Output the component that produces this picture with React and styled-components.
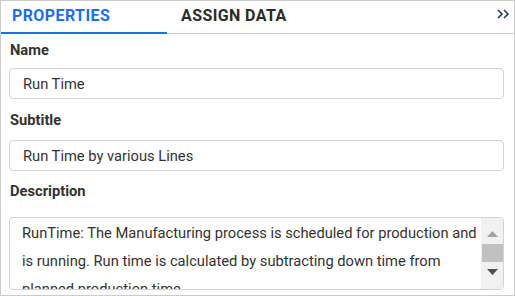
import React from "react";
import styled, { createGlobalStyle } from "styled-components";

const Global = createGlobalStyle`
  html, body { margin: 0; padding: 0; background: #fff; }
  body { font-family: Roboto, "Noto Sans", sans-serif; }
  * { box-sizing: border-box; }
`;

const Panel = styled.div`
  width: 515px;
  height: 296px;
  border: 1px solid #cccccc;
  display: flex;
  flex-direction: column;
  overflow: hidden;
  background: #fff;
`;

const TabBar = styled.div`
  display: flex;
  align-items: stretch;
  height: 33px;
  border-bottom: 1px solid #cfcfcf;
  flex-shrink: 0;
`;

const Tab = styled.div`
  width: ${(p) => p.$w}px;
  padding-left: ${(p) => p.$pl}px;
  padding-top: 5px;
  font-size: 16px;
  font-weight: 700;
  letter-spacing: 0.4px;
  color: ${(p) => (p.$active ? "#1a6ef0" : "#2b2b2b")};
  border-bottom: 2px solid ${(p) => (p.$active ? "#1a6ef0" : "transparent")};
  margin-bottom: -1px;
  white-space: nowrap;
`;

const Spacer = styled.div`
  flex: 1;
`;

const Collapse = styled.div`
  width: 17px;
  display: flex;
  align-items: flex-start;
  justify-content: flex-start;
  padding-top: 8px;
  color: #2c3e5a;
`;

const Body = styled.div`
  padding: 0 10px 0 8px;
  display: flex;
  flex-direction: column;
`;

const Label = styled.div`
  font-size: 14.7px;
  font-weight: 700;
  color: #333;
  height: 20px;
  line-height: 20px;
  padding-left: 1px;
  margin-top: ${(p) => p.$mt}px;
  margin-bottom: ${(p) => p.$mb}px;
`;

const Input = styled.div`
  height: 31px;
  border: 1px solid #d3d3d3;
  border-radius: 4px;
  padding: 0 13px;
  display: flex;
  align-items: center;
  font-size: 14.7px;
  color: #333;
`;

const TextArea = styled.div`
  height: 73px;
  border: 1px solid #d3d3d3;
  border-radius: 4px;
  display: flex;
  overflow: hidden;
`;

const TextContent = styled.div`
  flex: 1;
  padding: 1px 2px 0 12px;
  font-size: 14.7px;
  line-height: 28px;
  color: #333;
  overflow: hidden;
`;

const Scrollbar = styled.div`
  width: 22px;
  background: #f1f1f1;
  display: flex;
  flex-direction: column;
  align-items: center;
  padding: 6px 0 7px;
`;

const Arrow = styled.div`
  height: 20px;
  display: flex;
  align-items: center;
  justify-content: center;
  width: 100%;
`;

const Thumb = styled.div`
  width: 21px;
  height: 18px;
  background: #c1c1c1;
`;

export default function App() {
  return (
    <>
      <Global />
      <Panel>
        <TabBar>
          <Tab $active $w={166} $pl={11}>PROPERTIES</Tab>
          <Tab $w={150} $pl={14}>ASSIGN DATA</Tab>
          <Spacer />
          <Collapse>
            <svg width="13" height="10" viewBox="0 0 13 10" fill="none" stroke="currentColor" strokeWidth="1.7">
              <path d="M1 1 L5 5 L1 9" />
              <path d="M7 1 L11 5 L7 9" />
            </svg>
          </Collapse>
        </TabBar>
        <Body>
          <Label $mt={6} $mb={8}>Name</Label>
          <Input>Run Time</Input>
          <Label $mt={11} $mb={10}>Subtitle</Label>
          <Input>Run Time by various Lines</Input>
          <Label $mt={10} $mb={16}>Description</Label>
          <TextArea>
            <TextContent>
              RunTime: The Manufacturing process is scheduled for production and is running. Run time is calculated by subtracting down time from planned production time.
            </TextContent>
            <Scrollbar>
              <Arrow>
                <svg width="11" height="6" viewBox="0 0 11 6"><path d="M0 6 L5.5 0 L11 6 Z" fill="#a3a3a3" /></svg>
              </Arrow>
              <Thumb />
              <Spacer />
              <Arrow>
                <svg width="11" height="6" viewBox="0 0 11 6"><path d="M0 0 L11 0 L5.5 6 Z" fill="#505050" /></svg>
              </Arrow>
            </Scrollbar>
          </TextArea>
        </Body>
      </Panel>
    </>
  );
}
